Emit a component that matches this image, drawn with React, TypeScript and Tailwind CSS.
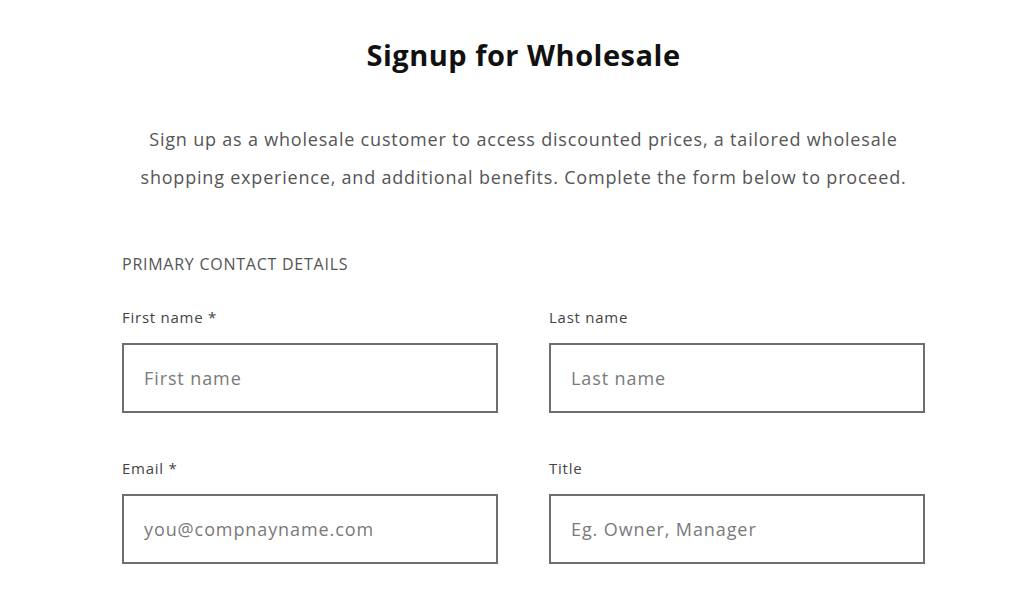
import React from "react";

function Field({ label, placeholder }: { label: string; placeholder: string }) {
  return (
    <div className="flex flex-col">
      <label className="text-[15px] leading-[20px] tracking-[0.75px] text-[#444] mb-[16px]">{label}</label>
      <input
        className="h-[70px] border-2 border-[#6e6e6e] px-[20px] text-[18px] tracking-[0.9px] text-[#333] placeholder:text-[#7a7a7a] outline-none bg-white"
        placeholder={placeholder}
      />
    </div>
  );
}

export default function App() {
  return (
    <div className="min-h-[612px] bg-white" style={{ fontFamily: "'Open Sans', Lato, sans-serif" }}>
      <div className="w-[803px] ml-[122px] pt-[36px]">
        <h1 className="text-center text-[29px] leading-[38px] font-bold tracking-[0.5px] text-[#111]">
          Signup for Wholesale
        </h1>
        <p className="mt-[46px] text-center text-[18px] leading-[38px] tracking-[0.8px] text-[#555]">
          Sign up as a wholesale customer to access discounted prices, a tailored wholesale
          <br />
          shopping experience, and additional benefits. Complete the form below to proceed.
        </p>
        <div className="mt-[58px] text-[16px] leading-[20px] tracking-[0.75px] text-[#555]">PRIMARY CONTACT DETAILS</div>
        <div className="mt-[33px] grid grid-cols-2 gap-x-[51px] gap-y-[45px]">
          <Field label="First name *" placeholder="First name" />
          <Field label="Last name" placeholder="Last name" />
          <Field label="Email *" placeholder="you@compnayname.com" />
          <Field label="Title" placeholder="Eg. Owner, Manager" />
        </div>
      </div>
    </div>
  );
}
